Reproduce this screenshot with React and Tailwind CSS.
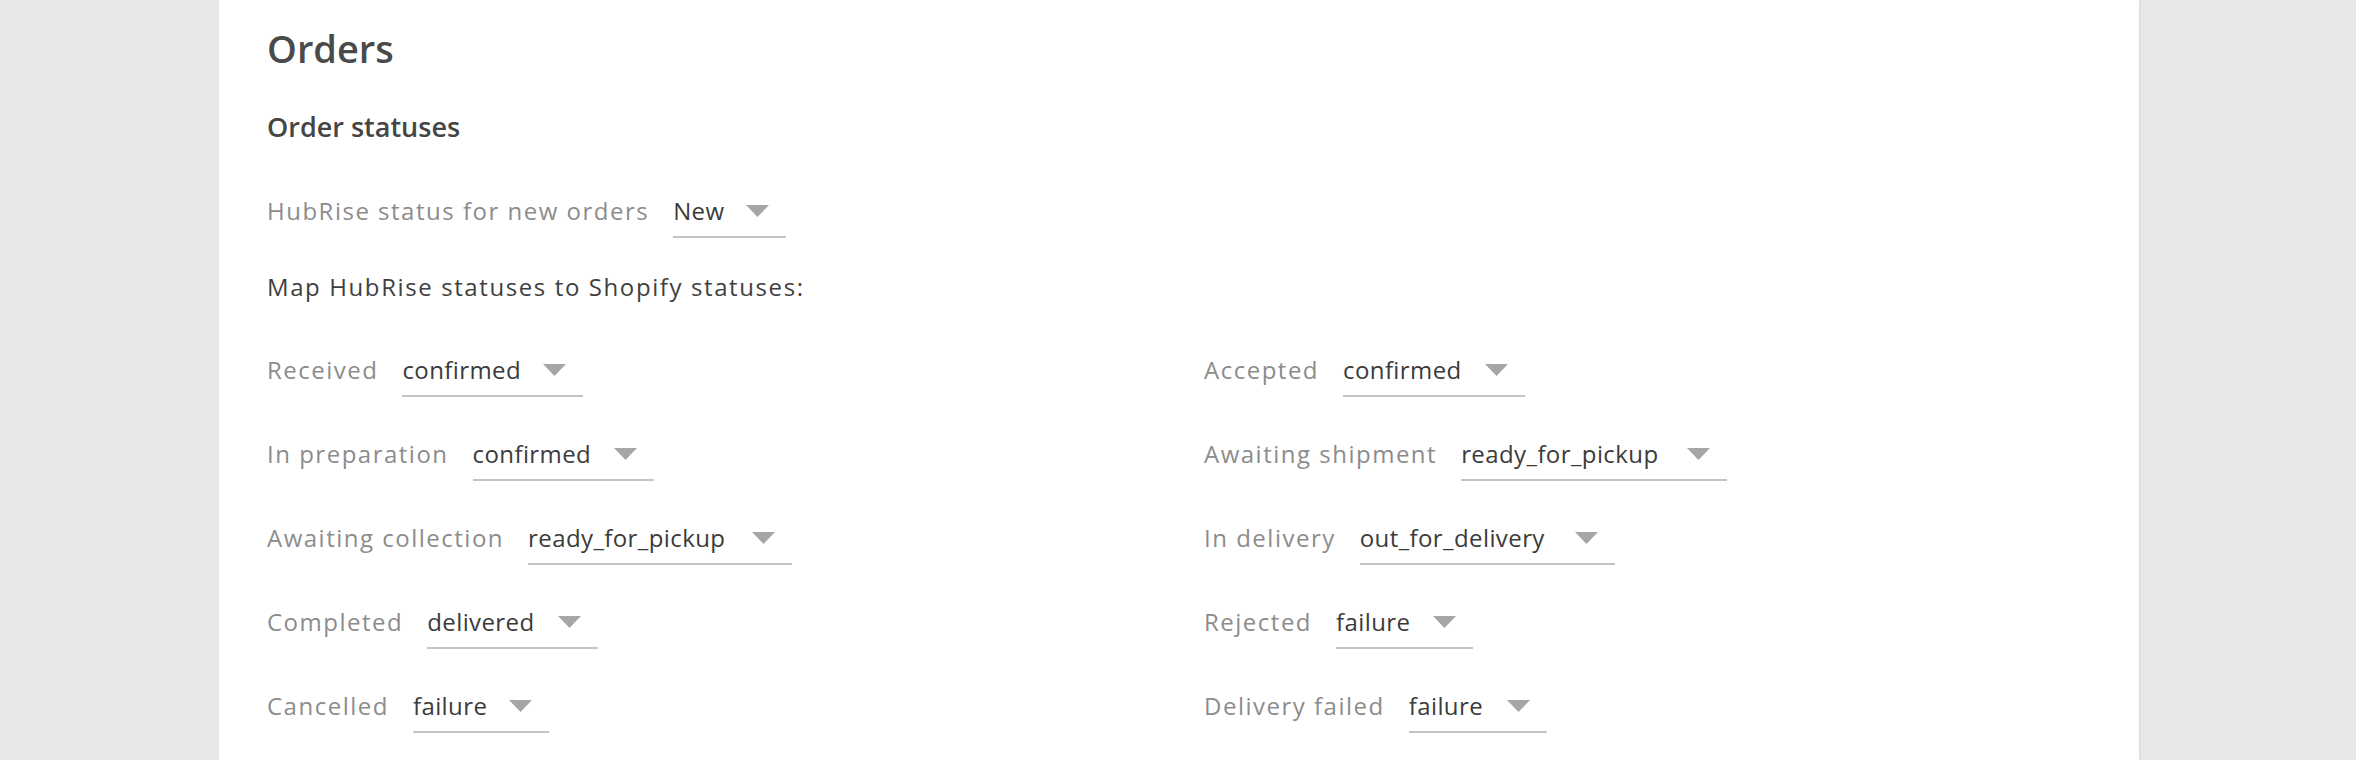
import React from 'react'

const LEFT = [
  { label: 'Received', value: 'confirmed', w: 'w-[181px]' },
  { label: 'In preparation', value: 'confirmed', w: 'w-[181px]' },
  { label: 'Awaiting collection', value: 'ready_for_pickup', w: 'w-[264px]' },
  { label: 'Completed', value: 'delivered', w: 'w-[171px]' },
  { label: 'Cancelled', value: 'failure', w: 'w-[136px]' },
]

const RIGHT = [
  { label: 'Accepted', value: 'confirmed', w: 'w-[182px]' },
  { label: 'Awaiting shipment', value: 'ready_for_pickup', w: 'w-[266px]' },
  { label: 'In delivery', value: 'out_for_delivery', w: 'w-[255px]' },
  { label: 'Rejected', value: 'failure', w: 'w-[137px]' },
  { label: 'Delivery failed', value: 'failure', w: 'w-[138px]' },
]

function Caret() {
  return (
    <svg width="23" height="12" viewBox="0 0 23 12" className="shrink-0">
      <polygon points="0,0 23,0 11.5,12" fill="#a6a6a6" />
    </svg>
  )
}

function Select({ value, w }) {
  return (
    <div className={`ml-6 ${w} flex items-center justify-between pr-[17px] pb-[7px] border-b-2 border-[#c4c4c4] leading-[36px] text-[#3b3b3b] tracking-[0.4px] cursor-pointer`}>
      <span>{value}</span>
      <Caret />
    </div>
  )
}

function Field({ label, value, w }) {
  return (
    <div className="flex items-end">
      <span className="leading-[36px] pb-[9px] text-[#8c8c8c] tracking-[1.5px]">{label}</span>
      <Select value={value} w={w} />
    </div>
  )
}

export default function App() {
  return (
    <div className="min-h-screen bg-[#e8e8e8] font-['Open_Sans',sans-serif] text-[24px]">
      <div className="w-[1920px] min-h-screen ml-[219px] bg-white shadow-[1px_0_2px_rgba(0,0,0,0.08)] px-12 pt-[26px]">
        <h1 className="text-[38px] leading-[44px] font-semibold text-[#4a4a4a]">Orders</h1>
        <h2 className="mt-[39px] text-[27px] leading-[36px] font-semibold text-[#454545]">Order statuses</h2>

        <div className="mt-[48px]">
          <Field label="HubRise status for new orders" value="New" w="w-[113px]" />
        </div>

        <p className="mt-[31px] leading-[36px] text-[#3f3f3f] tracking-[1.6px]">Map HubRise statuses to Shopify statuses:</p>

        <div className="mt-[47px] grid grid-cols-[937px_1fr] gap-y-[39px]">
          {LEFT.map((l, i) => (
            <React.Fragment key={l.label}>
              <Field {...l} />
              <Field {...RIGHT[i]} />
            </React.Fragment>
          ))}
        </div>
      </div>
    </div>
  )
}
